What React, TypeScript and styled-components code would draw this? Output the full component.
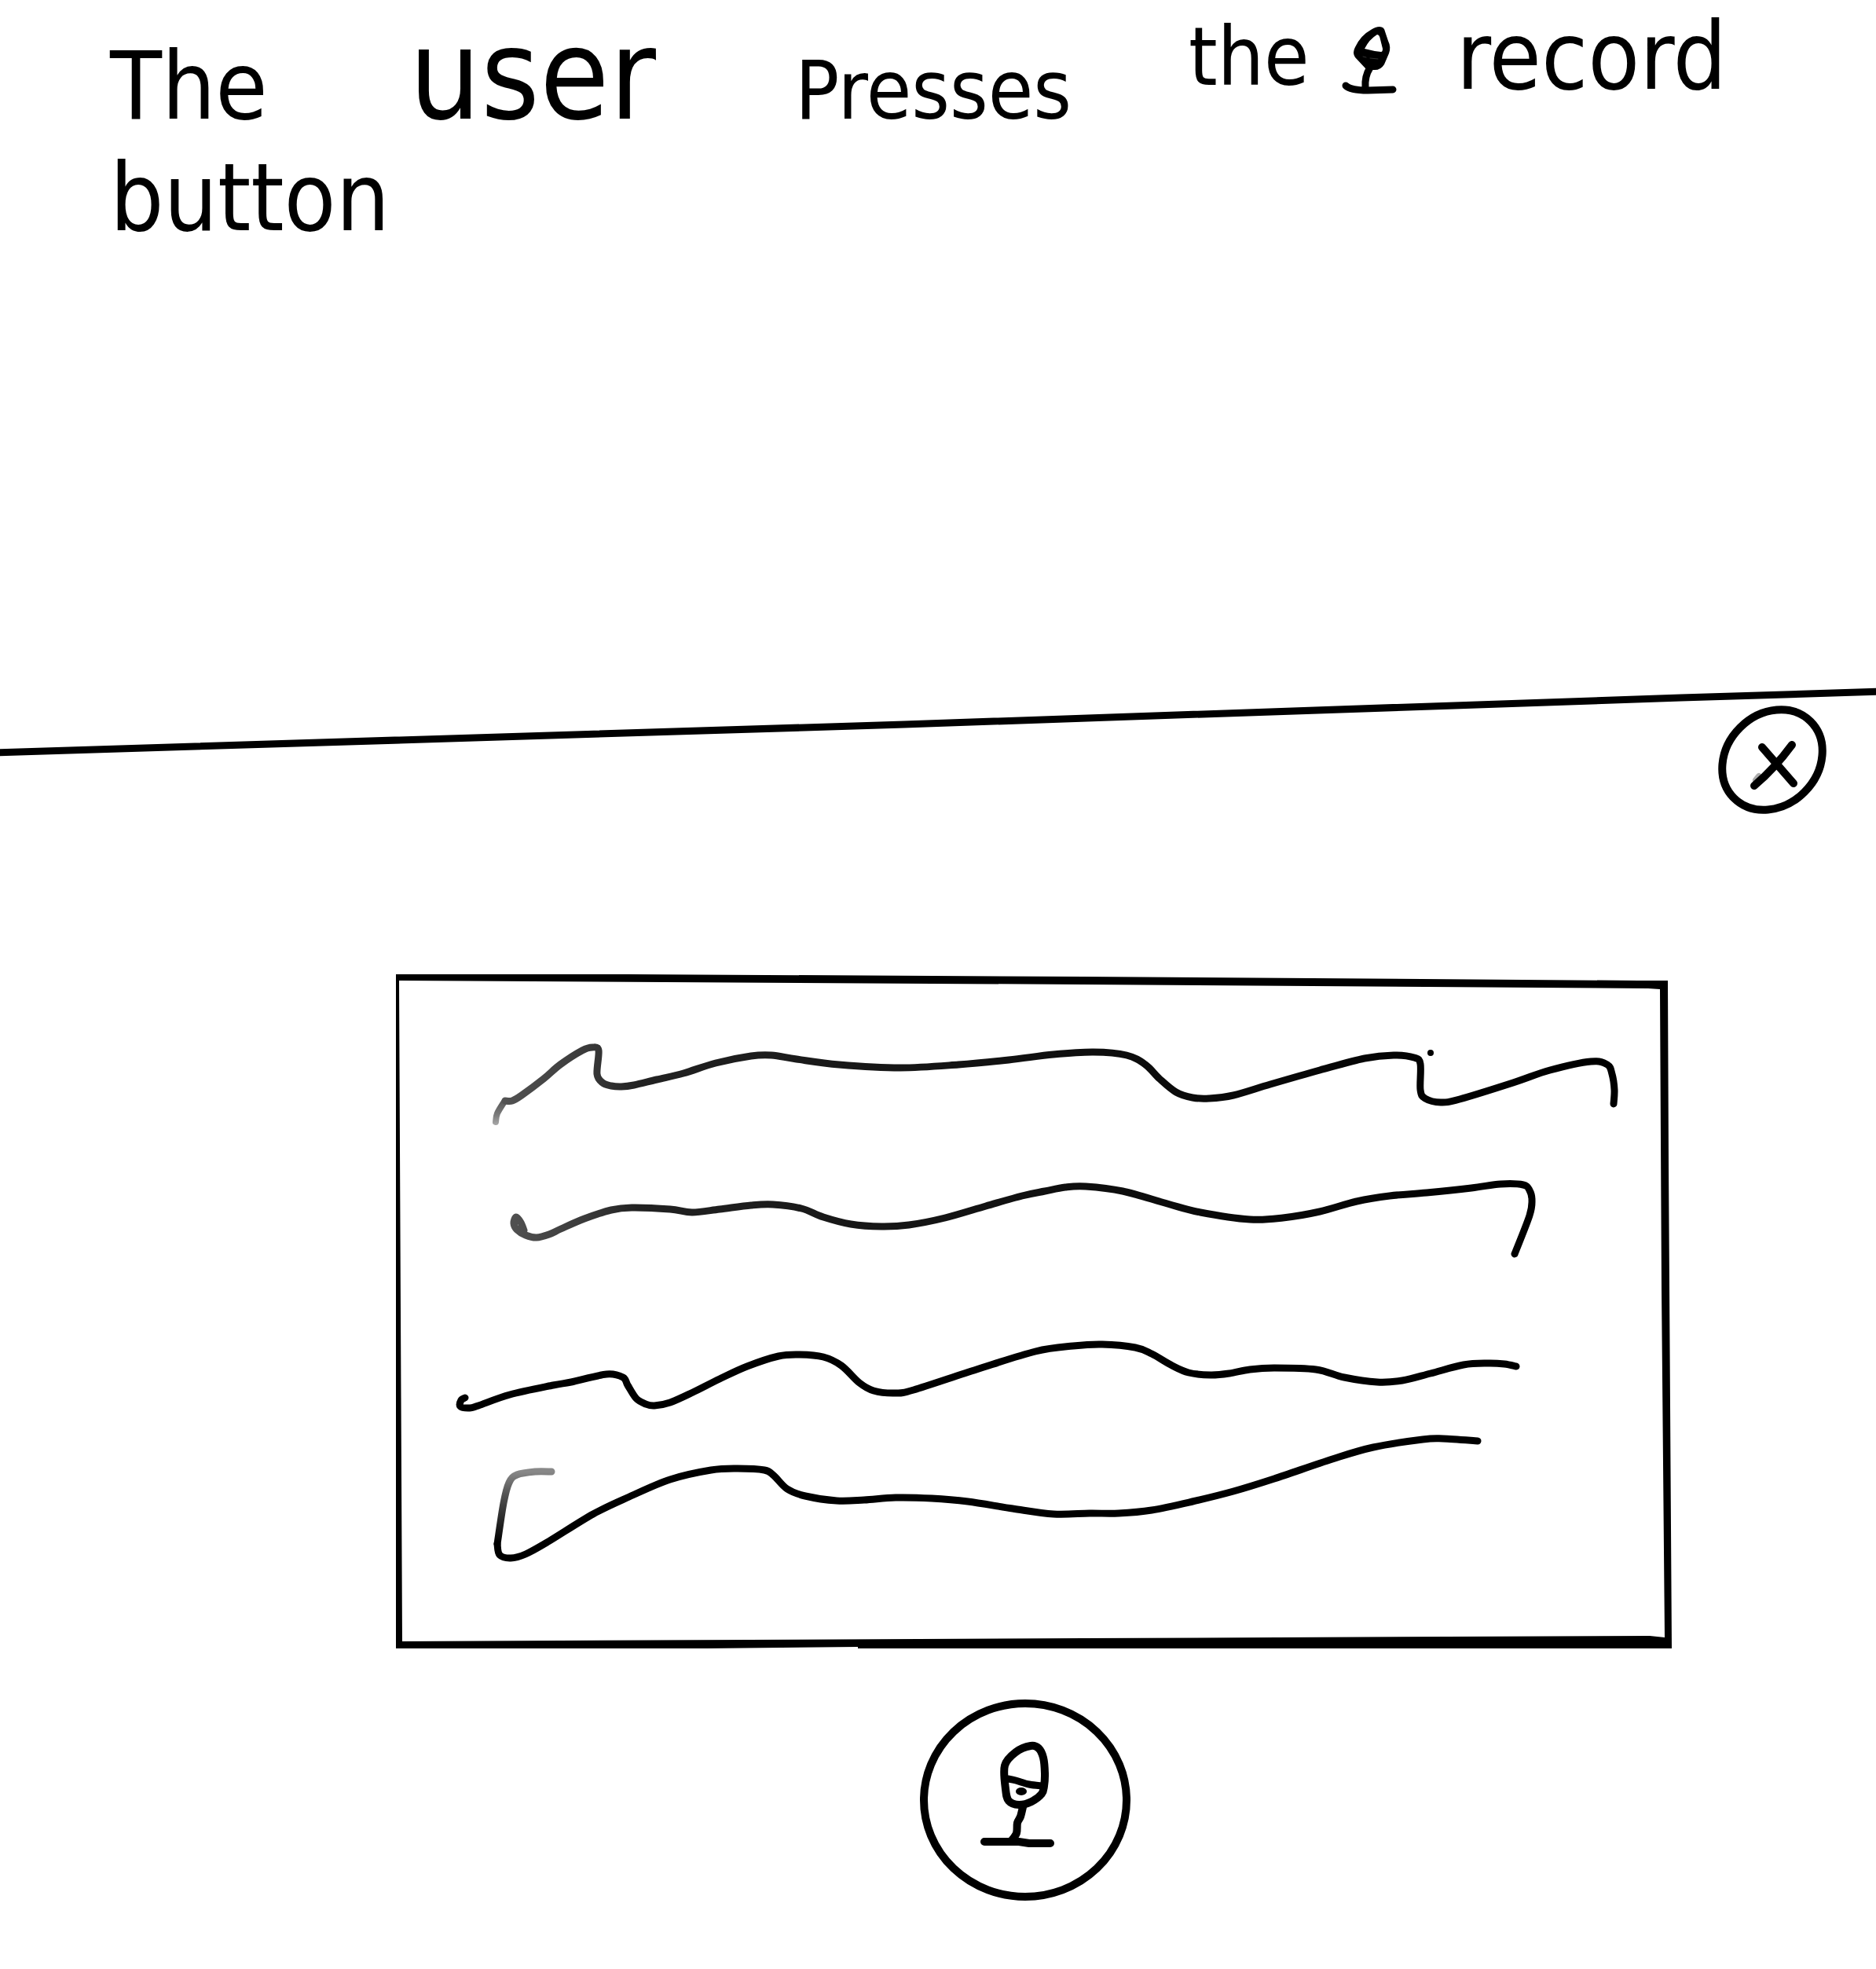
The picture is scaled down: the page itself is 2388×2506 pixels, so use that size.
import React from "react";
import styled, { createGlobalStyle } from "styled-components";

type Point = [number, number];

/* Turns a list of pen positions into one smooth stroke. */
function pen(points: Point[], closed = false): string {
  const n = points.length;
  const at = (i: number): Point =>
    closed ? points[(i + n) % n] : points[Math.max(0, Math.min(n - 1, i))];
  let d = `M${points[0][0]} ${points[0][1]}`;
  const last = closed ? n : n - 1;
  for (let i = 0; i < last; i++) {
    const [a, b, c, e] = [at(i - 1), at(i), at(i + 1), at(i + 2)];
    d += ` C${b[0] + (c[0] - a[0]) / 6} ${b[1] + (c[1] - a[1]) / 6} ${
      c[0] - (e[0] - b[0]) / 6
    } ${c[1] - (e[1] - b[1]) / 6} ${c[0]} ${c[1]}`;
  }
  return closed ? d + "Z" : d;
}

const lineOneTail: Point[] = [[631, 1428], [633, 1417], [642, 1402]];

const lineOne: Point[] = [
  [643, 1401], [652, 1401], [664, 1394], [692, 1373],
  [713, 1355], [741, 1337], [754, 1333], [762, 1337], [760, 1367], [767, 1378],
  [778, 1382], [791, 1383], [807, 1381], [836, 1374], [870, 1366], [911, 1353],
  [956, 1344], [982, 1343], [1014, 1348], [1068, 1355], [1146, 1359],
  [1220, 1355], [1284, 1349], [1341, 1342], [1392, 1339], [1434, 1343],
  [1458, 1355], [1476, 1373], [1497, 1390], [1518, 1397], [1539, 1398],
  [1570, 1394], [1617, 1380], [1680, 1362], [1737, 1347], [1774, 1343],
  [1800, 1346], [1808, 1354], [1808, 1387], [1814, 1398], [1834, 1403],
  [1858, 1399], [1926, 1378], [1973, 1362], [2025, 1351], [2046, 1355],
  [2052, 1367], [2055, 1387], [2054, 1405],
];

const lineTwo: Point[] = [
  [667, 1566], [663, 1556], [657, 1549], [654, 1557], [658, 1565], [669, 1572],
  [683, 1575], [699, 1571], [714, 1564], [744, 1551], [778, 1540], [804, 1537],
  [853, 1539], [881, 1543], [916, 1539], [956, 1534], [984, 1533], [1020, 1538],
  [1048, 1549], [1083, 1558], [1122, 1561], [1157, 1559], [1203, 1550],
  [1255, 1535], [1301, 1522], [1330, 1516], [1356, 1511], [1382, 1510],
  [1429, 1516], [1486, 1532], [1528, 1543], [1591, 1552], [1633, 1550],
  [1680, 1542], [1727, 1529], [1769, 1522], [1816, 1518], [1873, 1512],
  [1910, 1507], [1939, 1508], [1947, 1515], [1950, 1527], [1947, 1547],
  [1928, 1596],
];

const lineThree: Point[] = [
  [592, 1779], [587, 1782], [586, 1790], [598, 1792], [609, 1789], [649, 1775],
  [704, 1763], [727, 1759], [772, 1749], [793, 1753], [799, 1763], [810, 1780],
  [822, 1787], [833, 1789], [853, 1785], [882, 1772], [916, 1755], [951, 1739],
  [991, 1726], [1018, 1724], [1048, 1727], [1071, 1738], [1094, 1760],
  [1112, 1770], [1139, 1773], [1163, 1769], [1243, 1743], [1318, 1720],
  [1366, 1713], [1403, 1711], [1445, 1715], [1466, 1723], [1492, 1738],
  [1513, 1747], [1541, 1750], [1565, 1748], [1591, 1743], [1622, 1741],
  [1675, 1743], [1711, 1753], [1753, 1759], [1785, 1757], [1821, 1748],
  [1863, 1737], [1894, 1735], [1915, 1736], [1930, 1739],
];

const lineFourHook: Point[] = [
  [702, 1873], [681, 1873], [658, 1877], [648, 1887], [641, 1913], [633, 1965],
];

const lineFour: Point[] = [
  [633, 1965], [636, 1979], [650, 1983], [669, 1978], [698, 1962], [755, 1927],
  [801, 1905], [853, 1883], [905, 1871], [939, 1869], [973, 1871], [985, 1878],
  [1002, 1895], [1025, 1904], [1065, 1910], [1100, 1909], [1140, 1906],
  [1186, 1907], [1232, 1911], [1289, 1920], [1341, 1927], [1387, 1926],
  [1424, 1926], [1466, 1922], [1518, 1911], [1570, 1898], [1622, 1882],
  [1696, 1857], [1748, 1842], [1811, 1832], [1837, 1831], [1881, 1834],
];

const micHead: Point[] = [
  [1312, 2222], [1322, 2225], [1328, 2237], [1330, 2257], [1329, 2273],
  [1326, 2283], [1313, 2293], [1297, 2297], [1284, 2292], [1280, 2277],
  [1279, 2247], [1293, 2230],
];

const GlobalStyle = createGlobalStyle`
  *, *::before, *::after { box-sizing: border-box; }
  body { margin: 0; background: #fff; color: #000; }
`;

const Page = styled.div`
  display: flex;
  flex-direction: column;
  font-family: "DejaVu Sans Condensed", "DejaVu Sans", sans-serif;
`;

const Header = styled.header`
  min-height: 872px;
  padding-left: 140px;
`;

const Caption = styled.h1`
  display: grid;
  grid-template-columns: 380fr 490fr 500fr 193fr 147fr 533fr;
  align-items: baseline;
  margin: 0;
  font-size: 120px;
  font-weight: 400;
  line-height: 1.2;
`;

const Word = styled.span<{ $size?: number }>`
  font-size: ${(p) => p.$size ?? 120}px;
`;

const RaisedWord = styled(Word)`
  align-self: start;
  line-height: 144px;
`;

const LastWord = styled(Word)`
  grid-column: 1 / -1;
  line-height: 1;
`;

const Ink = styled.svg`
  display: block;
  width: 100%;
  height: auto;
  overflow: visible;
  fill: none;
  stroke: #000;
  stroke-linecap: round;
  stroke-linejoin: round;
`;

const InlineMic = styled(Ink)`
  width: 74px;
  align-self: start;
  margin-top: 32px;
`;

const Divider = styled(Ink)`
  height: 96px;
`;

const Toolbar = styled.div`
  display: flex;
  justify-content: flex-end;
  margin-top: -72px;
  padding-right: 60px;
`;

const SketchButton = styled.button<{ $width: number }>`
  width: ${(p) => p.$width}px;
  padding: 0;
  border: 0;
  border-radius: 50%;
  background: none;
  cursor: pointer;
`;

const Stage = styled.main`
  display: flex;
  flex-direction: column;
  align-items: center;
  gap: 59px;
  padding: 195px 0 82px 244px;
`;

const Panel = styled.section`
  width: 100%;
  max-width: 1632px;
`;

export default function App() {
  return (
    <Page>
      <GlobalStyle />
      <Header>
        <Caption>
          <Word>The</Word>
          <Word $size={160}>user</Word>
          <Word $size={104}>Presses</Word>
          <RaisedWord $size={104}>the</RaisedWord>
          <InlineMic viewBox="1706 32 74 90" strokeWidth={9} aria-hidden="true">
            <path
              fill="#000"
              fillRule="evenodd"
              stroke="none"
              d="M1756 34 Q1762 34 1763 40 L1767 52 Q1771 60 1768 68 L1762 82 Q1757 90 1748 89 L1739 88 L1725 73 Q1721 67 1725 60 Q1732 45 1745 38 Q1751 34 1756 34Z M1737 62 Q1743 50 1753 44 Q1756 44 1757 50 L1760 62 Q1760 66 1758 66 Q1748 65 1737 62Z"
            />
            <path d="M1735 72 L1739 73 M1744 74 L1754 75" stroke="#333" strokeWidth={1} />
            <path d="M1744 86 Q1737 97 1738 111" />
            <path d="M1713 109 Q1719 115 1741 115 L1773 114" />
          </InlineMic>
          <RaisedWord>record</RaisedWord>
          <LastWord>button</LastWord>
        </Caption>
      </Header>

      <Divider viewBox="0 872 2388 96" preserveAspectRatio="none" strokeWidth={9} aria-hidden="true">
        <path d="M-10 958 L1151 922 L2140 888 L2400 880" />
      </Divider>

      <Toolbar>
        <SketchButton $width={144} aria-label="Close">
          <Ink viewBox="2184 896 144 144" strokeWidth={10} aria-hidden="true">
            <ellipse cx={2256} cy={967} rx={69} ry={58} transform="rotate(-45 2256 967)" />
            <path d="M2235 993 L2239 988" stroke="#aaa" strokeWidth={8} />
            <path d="M2243 951 L2283 997" />
            <path d="M2281 948 Q2259 978 2233 1000" />
          </Ink>
        </SketchButton>
      </Toolbar>

      <Stage>
        <Panel aria-label="Transcript">
          <Ink viewBox="500 1235 1632 866" strokeWidth={9} aria-hidden="true">
            <defs>
              <linearGradient id="tailFade" gradientUnits="userSpaceOnUse" x1={0} y1={1432} x2={0} y2={1400}>
                <stop offset="0" stopColor="#aaa" />
                <stop offset="0.4" stopColor="#7c7c7c" />
                <stop offset="1" stopColor="#555" />
              </linearGradient>
              <linearGradient id="fadeIn" gradientUnits="userSpaceOnUse" x1={630} y1={0} x2={1930} y2={0}>
                <stop offset="0" stopColor="#555" />
                <stop offset="0.09" stopColor="#3a3a3a" />
                <stop offset="0.14" stopColor="#222" />
                <stop offset="0.5" stopColor="#111" />
                <stop offset="1" stopColor="#000" />
              </linearGradient>
              <linearGradient id="hookFade" gradientUnits="userSpaceOnUse" x1={0} y1={1873} x2={0} y2={1965}>
                <stop offset="0" stopColor="#888" />
                <stop offset="0.3" stopColor="#555" />
                <stop offset="1" stopColor="#000" />
              </linearGradient>
            </defs>
            <path
              fill="#000"
              fillRule="evenodd"
              stroke="none"
              d="M504 1240 L800 1240 L1380 1243 L2085 1248 L2123 1248 L2124 1480 L2128 2098 L1092 2098 L1092 2096 L900 2098 L504 2098Z M508 1248 L512 2089 L1380 2085 L2100 2082 L2119 2084 L2115 1640 L2113 1259 L2098 1258 L1380 1253Z"
            />
            <path d={pen(lineOneTail)} stroke="url(#tailFade)" strokeWidth={8} />
            <path d={pen(lineOne)} stroke="url(#fadeIn)" />
            <ellipse cx={1821} cy={1340} rx={4} ry={4} fill="#000" stroke="none" />
            <path d={pen(lineTwo)} stroke="url(#fadeIn)" />
            <path d={pen(lineThree)} />
            <path d={pen(lineFourHook)} stroke="url(#hookFade)" />
            <path d={pen(lineFour)} />
          </Ink>
        </Panel>

        <SketchButton $width={290} aria-label="Record">
          <Ink viewBox="1171 2160 290 264" strokeWidth={10} aria-hidden="true">
            <ellipse cx={1305} cy={2291} rx={129} ry={123} />
            <path d={pen(micHead, true)} />
            <path d={pen([[1283, 2264], [1293, 2266], [1310, 2271], [1327, 2273]])} strokeWidth={9} />
            <ellipse cx={1300} cy={2280} rx={7} ry={5} fill="#000" stroke="none" />
            <path d={pen([[1302, 2300], [1299, 2312], [1295, 2320], [1294, 2333], [1288, 2342]])} />
            <path d="M1253 2344 L1297 2344 L1310 2346 L1337 2346" />
          </Ink>
        </SketchButton>
      </Stage>
    </Page>
  );
}
